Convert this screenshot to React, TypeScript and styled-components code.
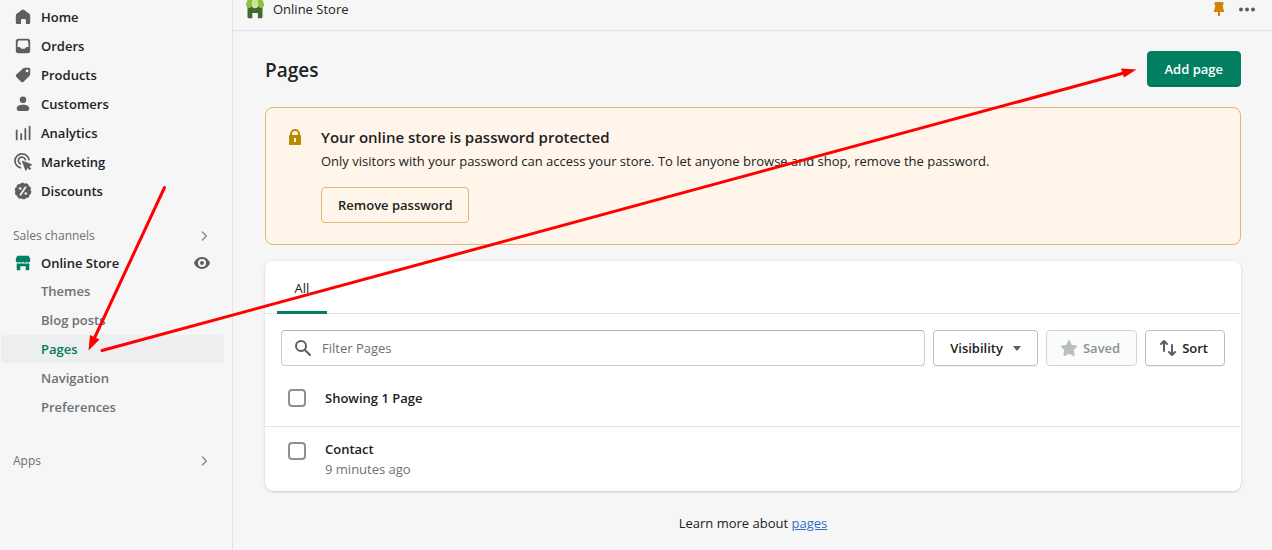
import React from "react";
import styled, { createGlobalStyle } from "styled-components";

const GlobalStyle = createGlobalStyle`
  *, *::before, *::after { box-sizing: border-box; }
  body {
    margin: 0;
    background: #f6f6f6;
    color: #202223;
    font-family: "Open Sans", "Noto Sans", sans-serif;
    font-size: 13px;
    line-height: 20px;
  }
  button, input { font: inherit; color: inherit; }
  ul { margin: 0; padding: 0; list-style: none; }
  h1, h2, p { margin: 0; }
`;

const Shell = styled.div`
  position: relative;
  display: flex;
  min-height: 100vh;
  overflow: hidden;
`;

const Sidebar = styled.nav`
  flex: 0 0 233px;
  padding: 3px 8px 0 1px;
  border-right: 1px solid #e1e3e5;
`;

const NavList = styled.ul`
  display: flex;
  flex-direction: column;
  gap: 1px;
`;

const NavLink = styled.a<{ $tone?: "sub" | "active" }>`
  display: flex;
  align-items: center;
  gap: 9px;
  height: 28px;
  padding-left: ${(p) => (p.$tone ? 40 : 13)}px;
  padding-right: 13px;
  border-radius: 4px;
  font-weight: 600;
  text-decoration: none;
  color: ${(p) => (p.$tone === "active" ? "#007b5c" : p.$tone === "sub" ? "#6d7175" : "#202223")};
  background: ${(p) => (p.$tone === "active" ? "#edeeef" : "transparent")};
`;

const ChannelRow = styled.div`
  display: flex;
  align-items: center;
  justify-content: space-between;
  padding-right: 12px;
`;

const SectionButton = styled.button`
  display: flex;
  align-items: center;
  justify-content: space-between;
  width: 100%;
  margin-top: 16px;
  padding: 5px 12px 3px;
  border: 0;
  background: none;
  color: #6d7175;
  font-size: 12px;
  font-weight: 500;
`;

const AppsSection = styled.div`
  padding-top: 9px;
`;

const IconButton = styled.button`
  display: flex;
  padding: 0;
  border: 0;
  background: none;
`;

const Icon = styled.svg<{ $size?: number; $color?: string }>`
  flex: none;
  width: ${(p) => p.$size ?? 20}px;
  height: ${(p) => p.$size ?? 20}px;
  fill: ${(p) => p.$color ?? "#5c5f62"};
`;

const Main = styled.main`
  flex: 1;
  min-width: 0;
`;

const TopBar = styled.header`
  display: flex;
  align-items: flex-start;
  justify-content: space-between;
  height: 31px;
  padding: 0 15px 0 12px;
  border-bottom: 1px solid #e1e3e5;
  line-height: 18px;
`;

const AppName = styled.div`
  display: flex;
  gap: 8px;
`;

const TopActions = styled.div`
  display: flex;
  gap: 8px;
`;

const Content = styled.div`
  padding: 20px 31px 0 32px;
`;

const TitleRow = styled.div`
  display: flex;
  align-items: center;
  justify-content: space-between;
  margin-bottom: 20px;
`;

const Title = styled.h1`
  padding-top: 2px;
  font-size: 19px;
  line-height: 28px;
  font-weight: 600;
`;

const Button = styled.button<{ $kind?: "primary" | "outline" }>`
  display: flex;
  align-items: center;
  gap: 4px;
  height: 36px;
  padding: 0 16px;
  border: 1px solid ${(p) => (p.$kind === "primary" ? "#008060" : p.$kind === "outline" ? "#e1b878" : "#babfc3")};
  border-radius: 4px;
  background: ${(p) => (p.$kind === "primary" ? "#008060" : p.$kind === "outline" ? "transparent" : "#fff")};
  color: ${(p) => (p.$kind === "primary" ? "#fff" : "#202223")};
  box-shadow: ${(p) =>
    p.$kind === "primary" ? "inset 0 -1px 0 #006e52" : p.$kind === "outline" ? "none" : "0 1px 0 rgba(0,0,0,.05)"};
  font-weight: 600;
  white-space: nowrap;
  &:disabled {
    border-color: #d2d5d8;
    background: #fafbfb;
    color: #8c9196;
    box-shadow: none;
  }
`;

const PrimaryButton = styled(Button)`
  padding: 0 17px;
`;

const FilterButton = styled(Button)<{ $disclosure?: boolean }>`
  padding: 0 ${(p) => (p.$disclosure ? 10 : 16)}px 0 ${(p) => (p.$disclosure ? 16 : 12)}px;
`;

const Banner = styled.section`
  display: flex;
  gap: 16px;
  margin-bottom: 16px;
  padding: 19px 19px 21px;
  border: 1px solid #e1b878;
  border-radius: 8px;
  background: #fff5ea;
`;

const BannerTitle = styled.h2`
  font-size: 15px;
  line-height: 20px;
  font-weight: 600;
`;

const BannerText = styled.p`
  margin: 4px 0 16px;
  line-height: 20px;
`;

const Card = styled.section`
  border-radius: 8px;
  background: #fff;
  box-shadow: 0 0 5px rgba(23, 24, 24, 0.05), 0 1px 2px rgba(0, 0, 0, 0.15);
`;

const Tabs = styled.div`
  display: flex;
  padding: 0 12px;
  border-bottom: 1px solid #e1e3e5;
`;

const Tab = styled.button`
  width: 50px;
  height: 53px;
  margin-bottom: -1px;
  padding: 3px 0 0;
  border: 0;
  border-bottom: 3px solid #008060;
  border-radius: 2px 2px 0 0;
  background: none;
`;

const Filters = styled.div`
  display: flex;
  gap: 8px;
  padding: 16px 16px 0;
`;

const SearchBox = styled.label`
  display: flex;
  flex: 1;
  align-items: center;
  gap: 9px;
  height: 36px;
  padding: 0 11px;
  border: 1px solid #c9cccf;
  border-top-color: #aeb4b9;
  border-radius: 4px;
`;

const SearchInput = styled.input`
  flex: 1;
  min-width: 0;
  padding: 0;
  border: 0;
  outline: 0;
  background: none;
  &::placeholder {
    color: #6d7175;
    opacity: 1;
  }
`;

const Row = styled.label<{ $last?: boolean }>`
  display: flex;
  align-items: flex-start;
  gap: 19px;
  padding: ${(p) => (p.$last ? "12px 23px" : "22px 23px 18px")};
  border-top: ${(p) => (p.$last ? "1px solid #e1e3e5" : "0")};
`;

const Checkbox = styled.input<{ $multiline?: boolean }>`
  appearance: none;
  width: 18px;
  height: 18px;
  margin: ${(p) => (p.$multiline ? 3 : 1)}px 0 0;
  border: 2px solid #8c9196;
  border-radius: 4px;
  background: #fff;
`;

const RowText = styled.span`
  display: flex;
  flex-direction: column;
`;

const Strong = styled.span`
  font-weight: 600;
`;

const Muted = styled.span`
  color: #6d7175;
`;

const Footer = styled.p`
  padding: 22px 0 16px;
  text-align: center;
  a { color: #2c6ecb; }
`;

const Annotations = styled.svg`
  position: absolute;
  top: 0;
  left: 0;
  pointer-events: none;
`;

const paths = {
  home: "M18 8.500V16a1.800 1.800 0 01-1.800 1.800h-3V13.300a1.200 1.200 0 00-1.200-1.200H9a1.200 1.200 0 00-1.200 1.200V17.800h-4A1.800 1.800 0 012 16V8.500a2.400 2.400 0 011-2L8.600 2.300a2.400 2.400 0 012.800 0L17 6.500a2.400 2.400 0 011 2z",
  orders:
    "M5 2h10a3 3 0 013 3v10a3 3 0 01-3 3H5a3 3 0 01-3-3V5a3 3 0 013-3zm.8 2A1.600 1.600 0 004.200 5.600L3.800 11h1.800c.6 0 1.100.3 1.400.8l.3.500c.3.500.8.700 1.400.7h2.600c.6 0 1.100-.2 1.400-.7l.3-.5c.3-.5.8-.8 1.400-.8h1.800L15.800 5.600A1.600 1.600 0 0014.200 4z",
  products:
    "M10.300 2.600A2 2 0 0111.700 2H16.500A1.500 1.500 0 0118 3.500v5.800a2 2 0 01-.6 1.400l-6.800 6.800a2 2 0 01-2.800 0L2.600 12.300a2 2 0 010-2.800zM14.500 7a1.500 1.500 0 100-3 1.500 1.500 0 000 3z",
  customers:
    "M10 9a3.600 3.600 0 100-7.200A3.600 3.600 0 0010 9zM3 14.800c0-2.600 3-4.100 7-4.100s7 1.500 7 4.100c0 1.700-.9 3-2.500 3h-9C3.900 17.800 3 16.500 3 14.800z",
  analytics:
    "M2 7a1 1 0 012 0v11H3a1 1 0 01-1-1zM7 11a1 1 0 012 0v6a1 1 0 01-2 0zM11.600 5.500a1 1 0 012 0V17a1 1 0 01-2 0zM16.300 3a1 1 0 012 0v14a1 1 0 01-2 0z",
  search:
    "M8 12a4 4 0 110-8 4 4 0 010 8zm9.707 4.293l-4.820-4.820A5.968 5.968 0 0014 8 6 6 0 002 8a6 6 0 006 6 5.968 5.968 0 003.473-1.113l4.820 4.820a.997.997 0 001.414 0 .999.999 0 000-1.414z",
  star: "M5.200 18a.8.8 0 01-.792-.914l.743-5.203-2.917-2.917a.8.8 0 01.434-1.355l4.398-.733 2.218-4.435a.8.8 0 011.435.008l2.123 4.361 4.498.801a.8.8 0 01.425 1.353l-2.917 2.917.744 5.203a.8.8 0 01-1.154.828l-4.382-2.220-4.502 2.223A.792.792 0 015.200 18z",
  sort: "M5.293 2.293a.997.997 0 011.414 0l3 3a1 1 0 01-1.414 1.414L7 5.414V13a1 1 0 11-2 0V5.414L3.707 6.707a1 1 0 01-1.414-1.414l3-3zM13 7a1 1 0 012 0v7.585l1.293-1.292a.999.999 0 111.414 1.414l-3 3a.997.997 0 01-1.414 0l-3-3a.997.997 0 010-1.414.999.999 0 011.414 0L13 14.585V7z",
  caret: "M6 8h8l-4 5z",
  chevron:
    "M8 16a.999.999 0 01-.707-1.707L11.586 10 7.293 5.707a.999.999 0 111.414-1.414l5 5a.999.999 0 010 1.414l-5 5A.997.997 0 018 16z",
  view: "M17.928 9.628C17.837 9.399 15.611 4 10 4S2.162 9.399 2.070 9.628a1.017 1.017 0 000 .744C2.163 10.601 4.389 16 10 16s7.837-5.399 7.928-5.628a1.017 1.017 0 000-.744zM10 14a4 4 0 110-8 4 4 0 010 8zm0-6a2 2 0 10.002 4.001A2 2 0 0010 8z",
  lock: "M5 8V7a5 5 0 0110 0v1h.200a.8.8 0 01.8.8v8.400a.8.8 0 01-.8.8H4.800a.8.8 0 01-.8-.8V8.800a.8.8 0 01.8-.8zM7 8h6V7a3 3 0 00-6 0zM9 11v4h2v-4z",
  pin: "M6.500 2h7a1 1 0 011 1v1.200a1 1 0 01-.7.900L14 8.200l1 2c.1.200.1.400.1.600V12h-4.100v4H9v-4H4.900v-1.200c0-.2 0-.4.1-.6l1-2 .2-3.100a1 1 0 01-.7-.9V3a1 1 0 011-1z",
  dots: "M4 7.500a2 2 0 100 4 2 2 0 000-4zm6 0a2 2 0 100 4 2 2 0 000-4zm6 0a2 2 0 100 4 2 2 0 000-4z",
  store:
    "M3.600 2h12.800L18 5.500v1.700a2.200 2.200 0 01-4 1.300 2.600 2.600 0 01-4 0 2.600 2.600 0 01-4 0 2.200 2.200 0 01-4-1.300V5.500zM3 10.600h14V17a1 1 0 01-1 1h-3v-4.500H7V18H4a1 1 0 01-1-1z",
};

type GlyphProps = { name: keyof typeof paths; size?: number; color?: string };
const Glyph = ({ name, size, color }: GlyphProps) => (
  <Icon viewBox="0 0 20 20" $size={size} $color={color} aria-hidden="true">
    <path fillRule="evenodd" d={paths[name]} />
  </Icon>
);

const MarketingIcon = () => (
  <Icon viewBox="0 0 20 20" $size={18} aria-hidden="true">
    <g fill="none" stroke="#5c5f62" strokeWidth="1.900" strokeLinecap="round">
      <path d="M7.300 16.400A7.800 7.800 0 1116.600 7.500" />
      <path d="M7.200 12.200A4 4 0 1112.700 7.500" />
    </g>
    <path d="M8.600 8.200l10.600 4.100c.9.400.8 1.400 0 1.700l-2.300.9 2.300 2.300-1.700 1.800-2.400-2.300-1 2.300c-.4.900-1.400.9-1.700 0z" />
  </Icon>
);

const DiscountIcon = () => (
  <Icon viewBox="0 0 20 20" $size={18} aria-hidden="true">
    <circle cx="10" cy="10" r="8.600" />
    <circle cx="10" cy="10" r="8.300" fill="none" stroke="#5c5f62" strokeWidth="2" strokeDasharray="3.400 1.815" />
    <path d="M12.800 5.800l-5.600 8.400" stroke="#f6f6f6" strokeWidth="1.900" strokeLinecap="round" />
    <circle cx="6.900" cy="7.200" r="1.400" fill="#f6f6f6" />
    <circle cx="13.100" cy="12.800" r="1.400" fill="#f6f6f6" />
  </Icon>
);

const StoreLogo = () => (
  <Icon viewBox="0 0 20 20" aria-hidden="true">
    <path fill="#3f6b2e" d="M2.500 6h15v11a1.200 1.200 0 01-1.200 1.200h-3.400V13H7.300v5.200H3.700A1.200 1.200 0 012.500 17z" />
    <path fill="#8fc043" d="M2.500 0H7.500L7 4.500a3 3 0 01-6 .8V4zM12.500 0h5L19 4v1.300a3 3 0 01-6-.8z" />
    <path fill="#c5e58f" d="M7.300 0h5.400L13.200 5a3.200 3.200 0 01-6.400 0z" />
  </Icon>
);

const primaryNav = [
  { label: "Home", icon: <Glyph name="home" size={18} /> },
  { label: "Orders", icon: <Glyph name="orders" size={18} /> },
  { label: "Products", icon: <Glyph name="products" size={18} /> },
  { label: "Customers", icon: <Glyph name="customers" size={18} /> },
  { label: "Analytics", icon: <Glyph name="analytics" size={18} /> },
  { label: "Marketing", icon: <MarketingIcon /> },
  { label: "Discounts", icon: <DiscountIcon /> },
];

const storeNav = ["Themes", "Blog posts", "Pages", "Navigation", "Preferences"];

export default function App() {
  return (
    <>
      <GlobalStyle />
      <Shell>
        <Sidebar>
          <NavList>
            {primaryNav.map(({ label, icon }) => (
              <li key={label}>
                <NavLink href="#">
                  {icon}
                  {label}
                </NavLink>
              </li>
            ))}
          </NavList>
          <SectionButton>
            Sales channels
            <Glyph name="chevron" size={16} color="#8c9196" />
          </SectionButton>
          <ChannelRow>
            <NavLink href="#">
              <Glyph name="store" size={18} color="#008060" />
              Online Store
            </NavLink>
            <IconButton aria-label="View your online store">
              <Glyph name="view" />
            </IconButton>
          </ChannelRow>
          <NavList>
            {storeNav.map((label) => (
              <li key={label}>
                <NavLink href="#" $tone={label === "Pages" ? "active" : "sub"}>
                  {label}
                </NavLink>
              </li>
            ))}
          </NavList>
          <AppsSection>
            <SectionButton>
              Apps
              <Glyph name="chevron" size={16} color="#8c9196" />
            </SectionButton>
          </AppsSection>
        </Sidebar>

        <Main>
          <TopBar>
            <AppName>
              <StoreLogo />
              Online Store
            </AppName>
            <TopActions>
              <IconButton aria-label="Unpin">
                <Glyph name="pin" color="#d58300" />
              </IconButton>
              <IconButton aria-label="More actions">
                <Glyph name="dots" />
              </IconButton>
            </TopActions>
          </TopBar>

          <Content>
            <TitleRow>
              <Title>Pages</Title>
              <PrimaryButton $kind="primary">Add page</PrimaryButton>
            </TitleRow>

            <Banner>
              <Glyph name="lock" color="#b98900" />
              <div>
                <BannerTitle>Your online store is password protected</BannerTitle>
                <BannerText>
                  Only visitors with your password can access your store. To let anyone browse and shop, remove the
                  password.
                </BannerText>
                <Button $kind="outline">Remove password</Button>
              </div>
            </Banner>

            <Card>
              <Tabs role="tablist">
                <Tab role="tab" aria-selected="true">
                  All
                </Tab>
              </Tabs>
              <Filters>
                <SearchBox>
                  <Glyph name="search" />
                  <SearchInput type="text" placeholder="Filter Pages" aria-label="Filter Pages" />
                </SearchBox>
                <FilterButton $disclosure>
                  Visibility
                  <Glyph name="caret" />
                </FilterButton>
                <FilterButton disabled>
                  <Glyph name="star" color="#babec3" />
                  Saved
                </FilterButton>
                <FilterButton>
                  <Glyph name="sort" />
                  Sort
                </FilterButton>
              </Filters>
              <Row>
                <Checkbox type="checkbox" />
                <Strong>Showing 1 Page</Strong>
              </Row>
              <Row $last>
                <Checkbox type="checkbox" $multiline />
                <RowText>
                  <Strong>Contact</Strong>
                  <Muted>9 minutes ago</Muted>
                </RowText>
              </Row>
            </Card>

            <Footer>
              Learn more about <a href="#">pages</a>
            </Footer>
          </Content>
        </Main>

        <Annotations width="1272" height="550" viewBox="0 0 1272 550" aria-hidden="true">
          <g stroke="#ff0000" strokeWidth="3" strokeLinecap="round">
            <path d="M164.500 187.500L94 339" />
            <path d="M102 350.500L1124 73" />
          </g>
          <g fill="#ff0000">
            <path d="M88.500 350.500L90 335l9.500 4.500z" />
            <path d="M1136.500 69.500L1121 68.500l3 9z" />
          </g>
        </Annotations>
      </Shell>
    </>
  );
}
